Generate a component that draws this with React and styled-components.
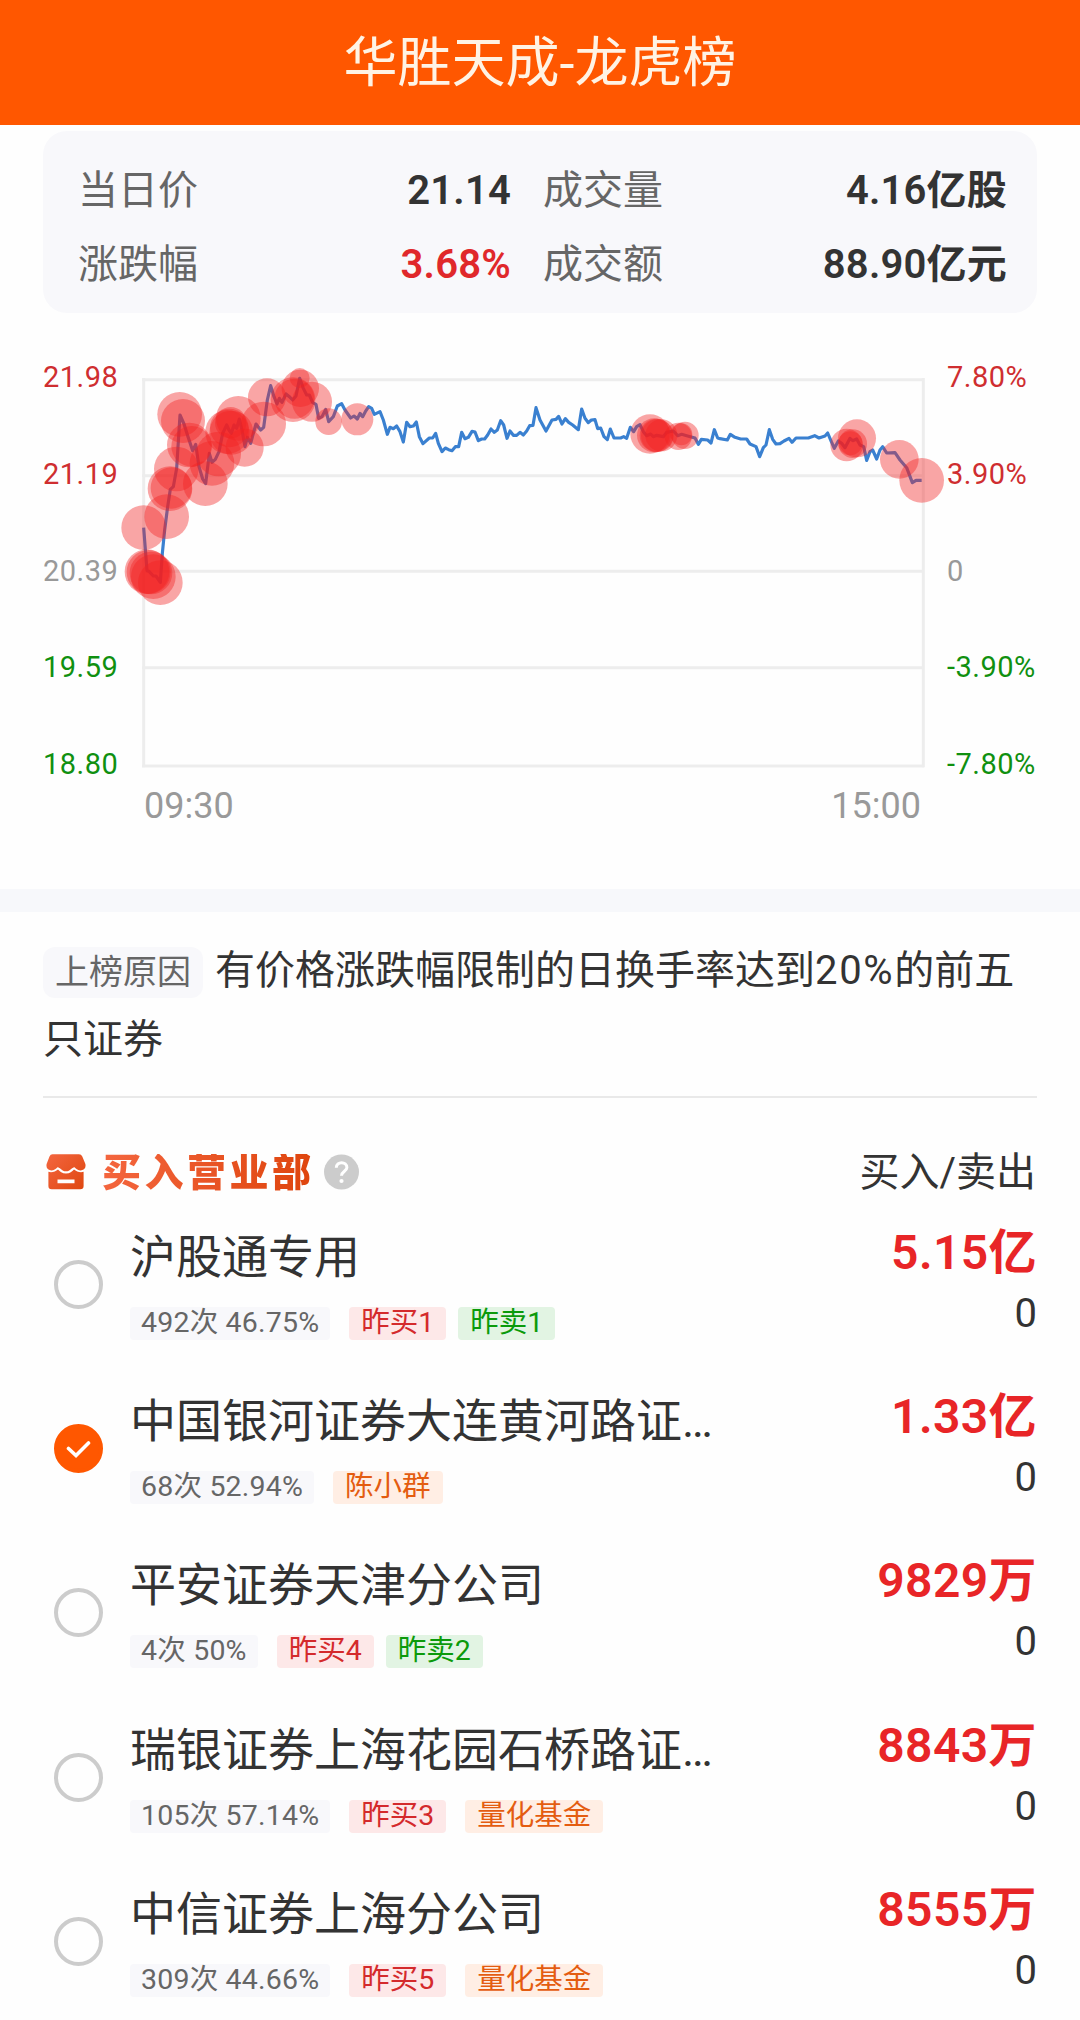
import React, { useState } from 'react';
import styled, { createGlobalStyle } from 'styled-components';

const quote = [
    { label: '当日价', value: '21.14' },
    { label: '成交量', value: '4.16亿股' },
    { label: '涨跌幅', value: '3.68%', color: '#e0282b' },
    { label: '成交额', value: '88.90亿元' },
];

const axis = [
    { price: '21.98', rate: '7.80%', color: '#cf2e30' },
    { price: '21.19', rate: '3.90%', color: '#cf2e30' },
    { price: '20.39', rate: '0', color: '#999' },
    { price: '19.59', rate: '-3.90%', color: '#109010' },
    { price: '18.80', rate: '-7.80%', color: '#109010' },
];

// each part of the day: x offset, then x,y pairs
const parts = [
    [-336, '341,533 351,662 357,664 370,678 378,678 391,697 397,610 404,540 413,470 421,418 430,410 440,355 450,195 462,222 474,260 488,302 497,283 507,350 518,387 527,401 538,310 546,337 556,328 567,305 578,250 590,225 597,240 604,250 612,225 620,235 628,207 636,240 645,290 652,262 662,280 670,250 678,222 692,240 701,232 712,150 722,107 732,140 741,162 748,145 756,157 768,132 780,142 788,150 798,138 809,85 820,115 830,135 838,135 848,158 858,163 866,205 876,200 887,178 896,215 910,200 922,168 935,161 945,180 962,204 972,198 982,207 990,190 998,200 1006,185 1016,170 1025,175 1033,193'],
    [714, '0,185 10,210 22,253 30,232 40,236 50,228 60,245 70,276 80,217 90,230 100,228 109,216 118,260 129,281 148,264 158,264 167,250 175,280 186,305 196,294 206,299 216,302 226,290 236,290 245,247 255,266 265,262 276,244 285,246 295,272 305,267 314,267 323,255 333,237 343,247 352,240 362,212 371,225 381,265 390,243 400,256 410,256 420,247 430,255 440,243 449,227 459,226 468,173 480,210 498,243 516,210 528,208 536,199 546,222 556,206 566,217 578,225 595,239 605,177 615,205 625,218 634,210 645,209 653,236 662,234 672,260 682,269 691,237 702,264 722,264 731,260 740,265 751,232 761,245 770,230 780,224 790,245 800,257 812,252 820,260 830,256 850,260 860,247 880,243 893,257 905,253 920,257 945,264 955,283 964,268 983,270 993,279 1003,239 1013,264'],
    [1734, '0,266 22,270 31,253 45,262 62,267 80,267 90,282 108,290 119,320 130,293 138,285 148,239 158,268 168,282 180,281 192,273 207,265 216,277 228,264 265,264 284,257 297,264 315,258 323,249 334,275 343,295 355,273 365,280 375,293 390,265 398,272 410,267 420,285 431,290 440,331 450,305 458,300 470,327 480,300 488,290 500,309 525,308 540,330 560,353 577,398 588,391 605,391'],
];

const line = parts
    .map(([dx, pts]) =>
        pts
            .split(' ')
            .map((p) => {
                const [x, y] = p.split(',').map(Number);
                return `${x + dx},${y - 84}`;
            })
            .join(' ')
    )
    .join(' ');

// big trades: x, y, radius
const trades = [
    [5, 449, 67], [15, 581, 67], [20, 582, 66], [27, 585, 64], [34, 596, 67], [55, 614, 67],
    [74, 416, 67], [84, 332, 67], [88, 330, 62], [103, 273, 67], [113, 109, 67], [123, 129, 66],
    [142, 201, 67], [149, 205, 61], [190, 317, 67], [210, 256, 67], [230, 228, 67],
    [256, 162, 66], [268, 164, 66], [262, 150, 58], [266, 134, 47], [289, 121, 67], [308, 209, 57],
    [365, 138, 67], [375, 58, 57], [453, 65, 67], [457, 62, 60], [475, 31, 56],
    [473, 0, 30], [510, 71, 60], [560, 131, 40], [646, 124, 48],
    [1524, 168, 59], [1536, 172, 51], [1543, 172, 50], [1546, 173, 49], [1558, 172, 48],
    [1609, 175, 41], [1618, 169, 33], [1629, 172, 41],
    [2114, 201, 49], [2125, 196, 36], [2132, 197, 43], [2145, 181, 57],
    [2272, 244, 58], [2339, 307, 67],
];

const seats = [
    {
        name: '沪股通专用',
        stat: '492次 46.75%',
        tags: [['昨买1', 'buy'], ['昨卖1', 'sell']],
        buy: '5.15亿',
    },
    {
        name: '中国银河证券大连黄河路证…',
        stat: '68次 52.94%',
        tags: [['陈小群', 'hot']],
        buy: '1.33亿',
    },
    {
        name: '平安证券天津分公司',
        stat: '4次 50%',
        tags: [['昨买4', 'buy'], ['昨卖2', 'sell']],
        buy: '9829万',
    },
    {
        name: '瑞银证券上海花园石桥路证…',
        stat: '105次 57.14%',
        tags: [['昨买3', 'buy'], ['量化基金', 'hot']],
        buy: '8843万',
    },
    {
        name: '中信证券上海分公司',
        stat: '309次 44.66%',
        tags: [['昨买5', 'buy'], ['量化基金', 'hot']],
        buy: '8555万',
    },
];

const Chart = () => (
    <ChartRow>
        <Axis>
            {axis.map((a) => <Tick key={a.price} $color={a.color}>{a.price}</Tick>)}
        </Axis>
        <div>
            <Plot viewBox="0 0 2346 1170">
                <g stroke="#ededed" strokeWidth="9" fill="none">
                    <path d="M0 5H2346M0 293H2346M0 580H2346M0 869H2346M0 1164H2346" />
                    <path d="M5 0V1168M2344 0V1168" />
                </g>
                <polyline points={line} fill="none" stroke="#3a80d0" strokeWidth="9.5" strokeLinejoin="round" />
                <g fill="#f22020" fillOpacity="0.4">
                    {trades.map(([x, y, r]) => <circle key={`${x}-${y}`} cx={x} cy={y} r={r} />)}
                </g>
            </Plot>
            <Times>
                <span>09:30</span>
                <span>15:00</span>
            </Times>
        </div>
        <Axis>
            {axis.map((a) => <Tick key={a.rate} $color={a.color}>{a.rate}</Tick>)}
        </Axis>
    </ChartRow>
);

const ShopIcon = () => (
    <svg width="40" height="36" viewBox="0 0 40 36">
        <defs>
            <linearGradient id="shop" gradientUnits="userSpaceOnUse" x1="4" y1="2" x2="36" y2="34">
                <stop offset="0" stopColor="#f2633c" />
                <stop offset="1" stopColor="#e04912" />
            </linearGradient>
        </defs>
        <path
            fill="url(#shop)"
            d="M6.500 .3H33Q35.300 .3 36.300 2.500L39.200 9.500Q40.300 13 38 15.300C35 17.600 31 16.200 28.500 13.200C26 13 24.500 17.300 20 17.300C15.500 17.300 14 13 11.500 13.200C9 16.200 5 17.600 2 15.300Q-.3 13 .8 9.500L3.500 2.500Q4.400 .3 6.500 .3Z"
        />
        <path
            fill="url(#shop)"
            fillRule="evenodd"
            d="M2.400 17.800C5.500 19 9.500 17.700 12 15.500C14 17.500 16 19.500 20 19.500C24 19.500 26 17.500 28 15.500C30.500 17.700 34.500 19 37.600 17.800V32Q37.600 35.300 34.300 35.300H5.700Q2.400 35.300 2.400 32ZM11.500 25.500V29.200H28.500V25.500Z"
        />
    </svg>
);

const HelpIcon = () => (
    <svg width="36" height="36" viewBox="0 0 36 36">
        <circle cx="17.500" cy="18" r="17.500" fill="#ccc" />
        <path d="M12.300 13.800C12.300 7 22.900 7 22.900 13.600C22.900 17.200 17.500 17.400 17.500 21.800" fill="none" stroke="#fff" strokeWidth="3" />
        <circle cx="17.500" cy="27" r="2.100" fill="#fff" />
    </svg>
);

const App = () => {
    const [picked, setPicked] = useState(1);

    return (
        <Page>
            <GlobalStyle />
            <Header>华胜天成-龙虎榜</Header>
            <Quote>
                {quote.map((q) => (
                    <QuoteItem key={q.label}>
                        <span>{q.label}</span>
                        <QuoteValue $color={q.color}>{q.value}</QuoteValue>
                    </QuoteItem>
                ))}
            </Quote>
            <Chart />
            <Band />
            <Reason>
                <ReasonTag>上榜原因</ReasonTag>
                有价格涨跌幅限制的日换手率达到<Num>20%</Num>的前五只证券
            </Reason>
            <ListHead>
                <ShopIcon />
                <ListTitle>买入营业部</ListTitle>
                <HelpIcon />
                <ListSide>买入/卖出</ListSide>
            </ListHead>
            {seats.map((s, i) => (
                <Seat key={s.name} onClick={() => setPicked(i)}>
                    <Radio $on={picked === i}>
                        {picked === i && (
                            <svg width="26" height="20" viewBox="0 0 26 20">
                                <path d="M2.500 9.500L10 16.500L22.500 4" fill="none" stroke="#fff" strokeWidth="3.600" strokeLinecap="round" />
                            </svg>
                        )}
                    </Radio>
                    <SeatInfo>
                        <SeatName>{s.name}</SeatName>
                        <Tags>
                            <Tag $kind="stat">{s.stat}</Tag>
                            {s.tags.map(([text, kind]) => <Tag key={text} $kind={kind}>{text}</Tag>)}
                        </Tags>
                    </SeatInfo>
                    <Amounts>
                        <Buy>{s.buy}</Buy>
                        <Sell>0</Sell>
                    </Amounts>
                </Seat>
            ))}
        </Page>
    );
};

export default App;

const GlobalStyle = createGlobalStyle`
    * {
        box-sizing: border-box;
    }
    body {
        margin: 0;
        background: #fefefe;
    }
`

const Page = styled.div`
    width: 1080px;
    height: 2020px;
    overflow: hidden;
    background: #fefefe;
    color: #333;
    font-family: Roboto, "Noto Sans CJK SC", sans-serif;
    font-size: 40px;
`

const Header = styled.header`
    height: 125px;
    padding-bottom: 9px;
    display: flex;
    align-items: center;
    justify-content: center;
    background: #ff5700;
    color: #fff3e4;
    font-size: 54px;
`

const Quote = styled.div`
    height: 182px;
    margin: 6px 43px 0;
    padding: 23px 30px 0 35px;
    display: grid;
    grid-template-columns: 433px 1fr;
    grid-auto-rows: 74px;
    column-gap: 32px;
    border-radius: 24px;
    background: #f8f8fb;
`

const QuoteItem = styled.div`
    display: flex;
    justify-content: space-between;
    line-height: 74px;
    color: #666;
`

const QuoteValue = styled.span`
    font-weight: 600;
    letter-spacing: 0.2px;
    color: ${(p) => p.$color || '#333'};
`

const ChartRow = styled.div`
    height: 576px;
    padding: 65px 0 0 43px;
    display: grid;
    grid-template-columns: 99px 782px 1fr;
`

const Axis = styled.div`
    height: 421px;
    margin-top: -18px;
    display: flex;
    flex-direction: column;
    justify-content: space-between;

    &:last-child {
        padding-left: 23px;
    }
`

const Tick = styled.span`
    font-size: 29px;
    line-height: 34px;
    letter-spacing: 0.5px;
    color: ${(p) => p.$color};
`

const Plot = styled.svg`
    display: block;
    width: 782px;
    height: 390px;
    overflow: visible;
`

const Times = styled.div`
    padding: 16px 3px 0 2px;
    display: flex;
    justify-content: space-between;
    font-size: 36px;
    line-height: 44px;
    color: #999;
`

const Band = styled.div`
    height: 23px;
    background: #f7f8fb;
`

const Reason = styled.div`
    height: 186px;
    margin: 0 43px;
    padding-top: 24px;
    border-bottom: 2px solid #e9e9e9;
    line-height: 69px;
`

const Num = styled.span`
    letter-spacing: 1.700px;
`

const ReasonTag = styled.span`
    display: inline-block;
    height: 51px;
    margin-right: 12px;
    padding: 0 12px;
    border-radius: 12px;
    background: #f8f8fb;
    color: #666;
    font-size: 34px;
    line-height: 50px;
`

const ListHead = styled.div`
    height: 82px;
    margin-top: 22px;
    padding: 34px 44px 0 46px;
    display: flex;
    align-items: flex-start;
`

const ListTitle = styled.span`
    margin: 0 9px 0 16px;
    font-size: 39px;
    font-weight: 900;
    line-height: 38px;
    letter-spacing: 3.500px;
    background: linear-gradient(100deg, #f4663f, #de440c);
    background-clip: text;
    color: transparent;
`

const ListSide = styled.span`
    margin-left: auto;
    line-height: 38px;
`

const Seat = styled.div`
    height: 164.200px;
    padding: 21px 43px 0 54px;
    display: flex;
    align-items: flex-start;
`

const Radio = styled.div`
    width: 49px;
    height: 49px;
    margin: 37px 27px 0 0;
    display: flex;
    align-items: center;
    justify-content: center;
    flex-shrink: 0;
    border: 4px solid ${(p) => (p.$on ? '#ff5700' : '#ccc')};
    border-radius: 50%;
    background: ${(p) => (p.$on ? '#ff5700' : 'transparent')};
`

const SeatInfo = styled.div`
    width: 590px;
`

const SeatName = styled.div`
    height: 68px;
    white-space: nowrap;
    font-size: 46px;
    line-height: 69px;
`

const Tags = styled.div`
    margin-top: 16px;
    display: flex;
`

const tagColors = {
    stat: ['#f8f8fb', '#666'],
    buy: ['#fde8e8', '#d42a2c'],
    sell: ['#e2f4e3', '#0b9a0b'],
    hot: ['#ffeee4', '#e45c10'],
}

const Tag = styled.span`
    height: 33px;
    margin-left: ${(p) => (p.$kind === 'stat' ? 0 : p.$kind === 'sell' ? 12 : 19)}px;
    padding: 0 ${(p) => (p.$kind === 'stat' ? 11 : 12)}px;
    border-radius: 4px;
    background: ${(p) => tagColors[p.$kind][0]};
    color: ${(p) => tagColors[p.$kind][1]};
    font-size: 28.500px;
    line-height: 32px;
    letter-spacing: ${(p) => (p.$kind === 'stat' ? 0.2 : 0)}px;
    white-space: nowrap;
`

const Amounts = styled.div`
    margin-left: auto;
    text-align: right;
`

const Buy = styled.div`
    color: #e82527;
    font-size: 48px;
    font-weight: 600;
    line-height: 60px;
    letter-spacing: 0.4px;
`

const Sell = styled.div`
    line-height: 62px;
`
